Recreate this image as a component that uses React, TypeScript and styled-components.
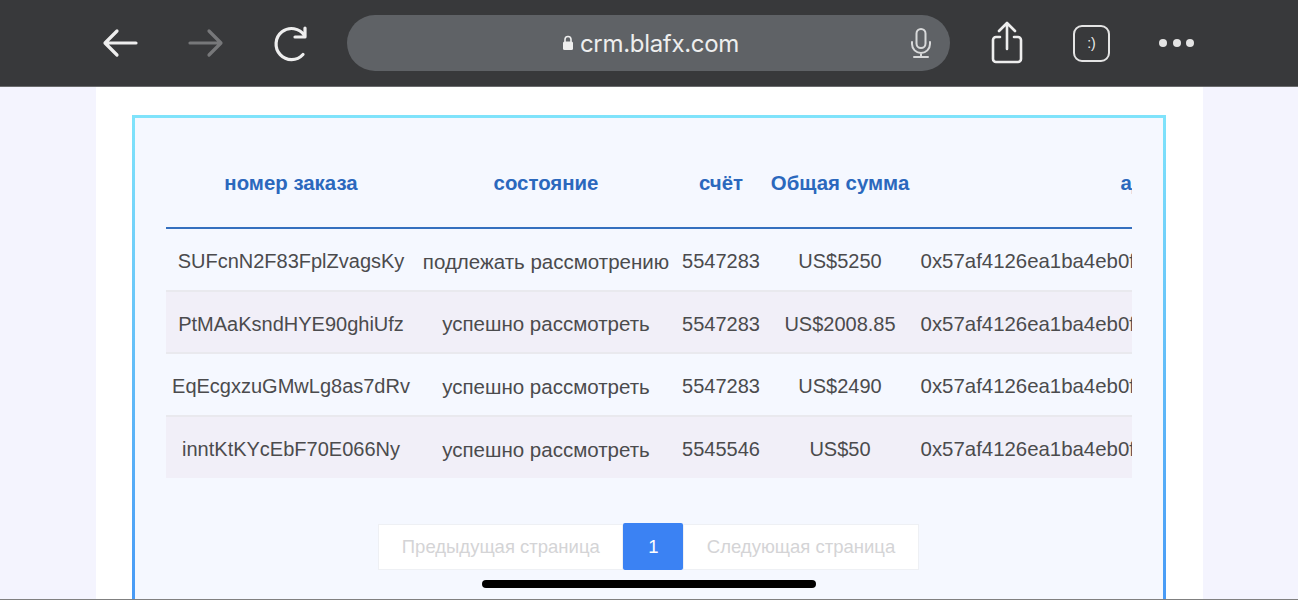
import React from "react";
import styled, { createGlobalStyle } from "styled-components";

const GlobalStyle = createGlobalStyle`
  html, body {
    margin: 0;
    padding: 0;
    height: 600px;
    overflow: hidden;
    background: #f4f4fe;
    font-family: "Liberation Sans", Arial, sans-serif;
  }
`;

const Screen = styled.div`
  position: relative;
  width: 1298px;
  height: 600px;
  overflow: hidden;
  display: flex;
  flex-direction: column;
  background: #f4f4fe;
  border-bottom: 1px solid #808080;
  box-sizing: border-box;
`;

const BrowserBar = styled.header`
  flex: none;
  height: 87px;
  box-sizing: border-box;
  background: #38393b;
  border-bottom: 1px solid #6a6b6d;
  display: flex;
  align-items: center;
  padding: 0 0 0 100px;
`;

const NavIcon = styled.svg`
  display: block;
  flex: none;
  fill: none;
  stroke: ${({ color }) => color || "#eeeeee"};
  stroke-width: 3.2;
  stroke-linecap: round;
  stroke-linejoin: round;
`;

const NavGroup = styled.div`
  display: flex;
  align-items: center;
  gap: 45px;
  margin-right: 37px;
`;

const AddressBar = styled.div`
  position: relative;
  width: 603px;
  height: 56px;
  border-radius: 28px;
  background: #5f6266;
  display: flex;
  align-items: center;
  justify-content: center;
  gap: 6px;
  padding-left: 4px;
  color: #eeeeee;
  font-family: "Inter", "Liberation Sans", sans-serif;
  font-size: 24px;
  letter-spacing: -0.3px;
  box-sizing: border-box;
`;

const MicSlot = styled.span`
  position: absolute;
  right: 17px;
  top: 12px;
`;

const ActionGroup = styled.div`
  display: flex;
  align-items: center;
  margin-left: 39px;
  gap: 47px;
`;

const TabsButton = styled.div`
  width: 37px;
  height: 37px;
  margin-left: 1px;
  box-sizing: border-box;
  border: 2.5px solid #e4e4e4;
  border-radius: 9px;
  color: #eeeeee;
  font-size: 14px;
  display: flex;
  align-items: center;
  justify-content: center;
`;

const Dots = styled.div`
  display: flex;
  gap: 5.5px;
  margin-left: 2px;
`;

const Dot = styled.span`
  width: 8px;
  height: 8px;
  border-radius: 50%;
  background: #e4e4e4;
`;

const Page = styled.main`
  flex: 1;
  min-height: 0;
  width: 1107px;
  margin-left: 96px;
  background: #ffffff;
  padding-top: 28px;
  padding-left: 36px;
  box-sizing: border-box;
  overflow: hidden;
`;

const Card = styled.section`
  width: 1034px;
  height: 560px;
  box-sizing: border-box;
  border: 3px solid transparent;
  border-image: linear-gradient(180deg, #7fe3fb 0%, #3f8ff5 100%) 1;
  background: #f5f8ff;
  padding: 22px 31px 0;
`;

const TableClip = styled.div`
  width: 966px;
  overflow: hidden;
`;

const OrdersTable = styled.table`
  width: 1220px;
  table-layout: fixed;
  border-collapse: collapse;
`;

const HeadCell = styled.th`
  height: 87px;
  padding: 0;
  color: #2b68bd;
  font-size: 20.4px;
  font-weight: 700;
  text-align: center;
  border-bottom: 2px solid #3570bf;
  white-space: nowrap;
`;

const Row = styled.tr`
  background: ${({ $striped }) => ($striped ? "#f1eff8" : "transparent")};
  border-bottom: 2px solid #e9e9ee;

  &:last-child {
    border-bottom: none;
  }
`;

const Cell = styled.td`
  height: 62.5px;
  padding: 5px 0 0;
  box-sizing: border-box;
  color: #4b4b4d;
  font-size: ${({ $cyrillic }) => ($cyrillic ? "20.5px" : "20px")};
  text-align: center;
  white-space: nowrap;
`;

const WalletCell = styled(Cell)`
  padding-right: 3px;
  font-size: 20.4px;
`;

const Pagination = styled.nav`
  display: flex;
  align-items: center;
  justify-content: center;
  margin-top: 45px;
  margin-left: -1px;
`;

const PageLink = styled.span`
  height: 46px;
  box-sizing: border-box;
  display: flex;
  align-items: center;
  padding: 0 22.5px;
  background: #ffffff;
  border: 1px solid #eef0f4;
  color: #d4d4d6;
  font-size: 18.5px;
`;

const CurrentPage = styled.span`
  width: 60px;
  height: 47px;
  border-radius: 2px;
  background: #3b82f3;
  color: #ffffff;
  font-size: 18.5px;
  display: flex;
  align-items: center;
  justify-content: center;
`;

const HomeIndicator = styled.div`
  position: absolute;
  left: 482px;
  top: 580px;
  width: 334px;
  height: 8px;
  border-radius: 4px;
  background: #000000;
`;

const rows = [
  { id: "SUFcnN2F83FplZvagsKy", status: "подлежать рассмотрению", account: "5547283", total: "US$5250" },
  { id: "PtMAaKsndHYE90ghiUfz", status: "успешно рассмотреть", account: "5547283", total: "US$2008.85" },
  { id: "EqEcgxzuGMwLg8as7dRv", status: "успешно рассмотреть", account: "5547283", total: "US$2490" },
  { id: "inntKtKYcEbF70E066Ny", status: "успешно рассмотреть", account: "5545546", total: "US$50" },
];

const wallet = "0x57af4126ea1ba4eb0f8a3c61d2e07b94c5f1a6d3";

export default function App() {
  return (
    <Screen>
      <GlobalStyle />
      <BrowserBar>
        <NavGroup>
          <NavIcon width="40" height="32" viewBox="0 0 40 32">
            <path d="M36 16H6M17 4 5 16l12 12" />
          </NavIcon>
          <NavIcon width="40" height="32" viewBox="0 0 40 32" color="#77787a">
            <path d="M5 16h30M24 4l12 12-12 12" />
          </NavIcon>
          <NavIcon width="40" height="40" viewBox="0 0 40 40">
            <path d="M33 31.5a15.5 15.5 0 1 1 1.5-19" />
            <path d="M35 5v9H25" />
          </NavIcon>
        </NavGroup>
        <AddressBar>
          <svg width="12" height="16" viewBox="0 0 12 16">
            <path d="M3 7V4.5a3 3 0 0 1 6 0V7" fill="none" stroke="#eeeeee" strokeWidth="1.6" />
            <rect x="1" y="6.5" width="10" height="8.5" rx="1.5" fill="#eeeeee" />
          </svg>
          crm.blafx.com
          <MicSlot>
            <NavIcon width="24" height="32" viewBox="0 0 24 32" color="#d8d9da" style={{ strokeWidth: 2 }}>
              <rect x="7.5" y="2" width="9" height="19" rx="4.5" />
              <path d="M3 15v2a9 9 0 0 0 18 0v-2M12 26v4M5 30h14" />
            </NavIcon>
          </MicSlot>
        </AddressBar>
        <ActionGroup>
          <NavIcon width="36" height="44" viewBox="0 0 36 44" style={{ strokeWidth: 2.6 }}>
            <path d="M18 28V3M10 10l8-8 8 8M11 16H7a3 3 0 0 0-3 3v19a3 3 0 0 0 3 3h22a3 3 0 0 0 3-3V19a3 3 0 0 0-3-3h-4" />
          </NavIcon>
          <TabsButton>:)</TabsButton>
          <Dots>
            <Dot />
            <Dot />
            <Dot />
          </Dots>
        </ActionGroup>
      </BrowserBar>
      <Page>
        <Card>
          <TableClip>
            <OrdersTable>
              <colgroup>
                <col style={{ width: 250 }} />
                <col style={{ width: 260 }} />
                <col style={{ width: 90 }} />
                <col style={{ width: 148 }} />
                <col style={{ width: 472 }} />
              </colgroup>
              <thead>
                <tr>
                  <HeadCell>номер заказа</HeadCell>
                  <HeadCell>состояние</HeadCell>
                  <HeadCell>счёт</HeadCell>
                  <HeadCell>Общая сумма</HeadCell>
                  <HeadCell>адрес</HeadCell>
                </tr>
              </thead>
              <tbody>
                {rows.map((row, i) => (
                  <Row key={row.id} $striped={i % 2 === 1}>
                    <Cell>{row.id}</Cell>
                    <Cell $cyrillic>{row.status}</Cell>
                    <Cell>{row.account}</Cell>
                    <Cell>{row.total}</Cell>
                    <WalletCell>{wallet}</WalletCell>
                  </Row>
                ))}
              </tbody>
            </OrdersTable>
          </TableClip>
          <Pagination>
            <PageLink>Предыдущая страница</PageLink>
            <CurrentPage>1</CurrentPage>
            <PageLink>Следующая страница</PageLink>
          </Pagination>
        </Card>
      </Page>
      <HomeIndicator />
    </Screen>
  );
}
